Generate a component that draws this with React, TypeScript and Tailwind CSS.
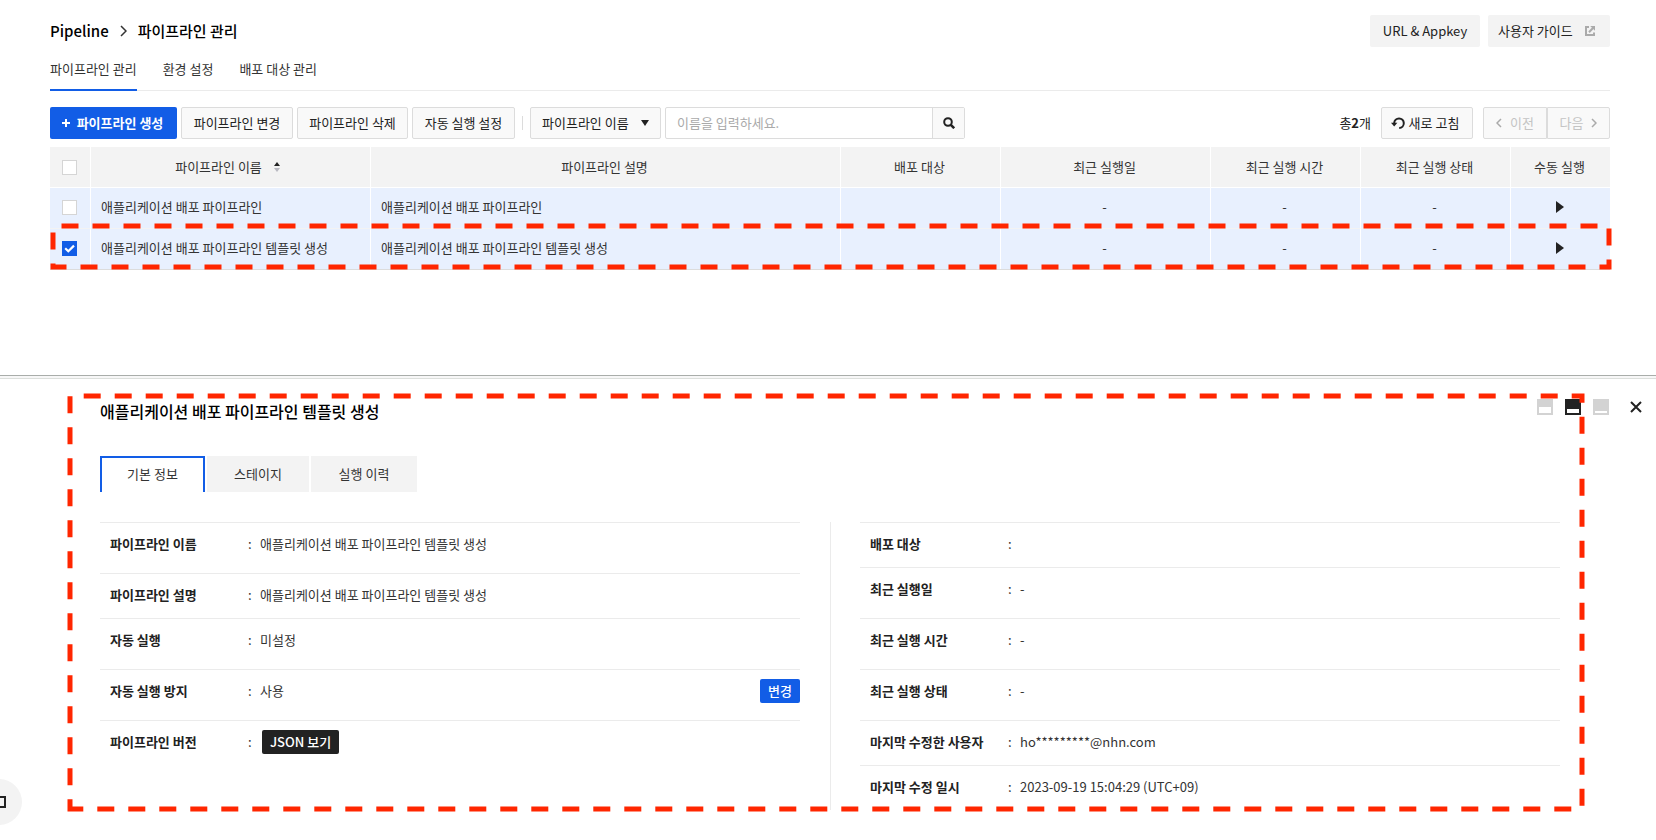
import React, { useState } from "react";

const rows = [
  { name: "애플리케이션 배포 파이프라인", desc: "애플리케이션 배포 파이프라인" },
  { name: "애플리케이션 배포 파이프라인 템플릿 생성", desc: "애플리케이션 배포 파이프라인 템플릿 생성" },
];

const btn =
  "flex h-8 items-center justify-center rounded-[2px] border border-[#dcdcdc] bg-[#f9f9f9] whitespace-nowrap";
const th = "h-10 border-r border-b border-white bg-[#f3f3f3] pr-0.5 font-normal last:border-r-0";
const td = "h-10 border-r border-white bg-[#e8f0fe] pr-0.5 pb-0.5 last:border-r-0";

function DashedFrame({ className, offset }: { className: string; offset: number }) {
  return (
    <svg className={`pointer-events-none absolute overflow-visible ${className}`} aria-hidden="true">
      <rect
        width="100%"
        height="100%"
        fill="none"
        stroke="#ff2600"
        strokeWidth="5"
        strokeDasharray="17 14"
        strokeDashoffset={offset}
      />
    </svg>
  );
}

function Check({ label, initial = false }: { label: string; initial?: boolean }) {
  const [on, setOn] = useState(initial);
  return (
    <label className="relative ml-3 block size-[15px]">
      <input
        type="checkbox"
        aria-label={label}
        checked={on}
        onChange={(e) => setOn(e.target.checked)}
        className="block size-[15px] appearance-none border border-[#d5d5d5] bg-white checked:border-[#125de6] checked:bg-[#125de6]"
      />
      {on && (
        <svg className="pointer-events-none absolute inset-0" width="15" height="15" viewBox="0 0 15 15" fill="none">
          <path d="M3.2 7.2 6.3 10.2 12 4.6" stroke="#fff" strokeWidth="2.2" />
        </svg>
      )}
    </label>
  );
}

function Field({
  label,
  tall = false,
  action,
  children,
}: {
  label: string;
  tall?: boolean;
  action?: React.ReactNode;
  children?: React.ReactNode;
}) {
  return (
    <div className={`flex items-start border-t border-[#ebebeb] pt-[9px] pl-2.5 ${tall ? "h-[51px]" : "h-[45px]"}`}>
      <dt className="w-[138px] leading-6 font-bold text-[#222]">{label}</dt>
      <dd className="flex flex-1 items-start leading-6">
        <span className="w-3">:</span>
        <div className="flex-1">{children}</div>
        {action}
      </dd>
    </div>
  );
}

function SizeIcon({ label, top, active = false }: { label: string; top: number; active?: boolean }) {
  return (
    <button type="button" aria-label={label} className={active ? "text-[#222]" : "text-[#d3d3d3]"}>
      <svg width="16" height="16" viewBox="0 0 16 16">
        <path fill="currentColor" d="M0 0h16v16H0z" />
        <rect x="2" y={top} width="12" height={14 - top} fill="#fff" />
      </svg>
    </button>
  );
}

export default function App() {
  const [query, setQuery] = useState("");
  return (
    <div className="relative flex min-h-screen flex-col overflow-hidden bg-white font-['Noto_Sans_CJK_KR','Noto_Sans_KR',sans-serif] text-[13px] leading-5 text-[#333]">
      <main className="min-h-[375px] px-[50px] pr-[46px]">
        <header className="flex items-start justify-between pt-[15px]">
          <h1 className="flex h-8 items-center text-[15px] font-medium text-black">
            Pipeline
            <svg className="mx-[11px]" width="7" height="12" viewBox="0 0 7 12" fill="none">
              <path d="M1 1l5 5-5 5" stroke="#333" strokeWidth="1.5" />
            </svg>
            파이프라인 관리
          </h1>
          <div className="flex gap-2 text-[#222]">
            <button type="button" className="h-8 w-[110px] rounded-[2px] bg-[#f3f3f3]">
              URL &amp; Appkey
            </button>
            <a href="#guide" className="flex h-8 w-[122px] items-center gap-3 rounded-[2px] bg-[#f3f3f3] pl-2.5">
              사용자 가이드
              <svg width="10" height="10" viewBox="0 0 10 10" fill="none" stroke="#aaa" strokeWidth="2">
                <path d="M4 1H1v8h8V6.5M4 6.2 8 2" />
                <path d="M5.2 0H10v4.8z" fill="#aaa" stroke="none" />
              </svg>
            </a>
          </div>
        </header>

        <nav className="mt-2.5 flex h-[34px] gap-[26px] border-b border-[#ebebeb]">
          <a href="#manage" className="h-[34px] border-b-2 border-[#125de6] pt-0.5">
            파이프라인 관리
          </a>
          <a href="#env" className="pt-0.5">환경 설정</a>
          <a href="#target" className="pt-0.5">배포 대상 관리</a>
        </nav>

        <div className="mt-4 flex items-center justify-between text-[#222]">
          <div className="flex items-center gap-1">
            <button type="button" className="flex h-8 w-[127px] items-center justify-center gap-[7px] rounded-[2px] bg-[#125de6] pr-0.5 font-bold text-white">
              <svg width="8" height="8" viewBox="0 0 8 8" stroke="#fff" strokeWidth="2">
                <path d="M4 0v8M0 4h8" />
              </svg>
              파이프라인 생성
            </button>
            <button type="button" className={`${btn} w-28`}>파이프라인 변경</button>
            <button type="button" className={`${btn} w-[111px]`}>파이프라인 삭제</button>
            <button type="button" className={`${btn} w-[103px]`}>자동 실행 설정</button>
            <span className="mx-[3px] h-3.5 w-px bg-[#dcdcdc]" />
            <div className="relative">
              <select aria-label="검색 기준" className="h-8 w-[131px] appearance-none rounded-[2px] border border-[#dcdcdc] bg-[#f9f9f9] pl-[11px]">
                <option>파이프라인 이름</option>
                <option>파이프라인 설명</option>
              </select>
              <svg className="pointer-events-none absolute top-[13px] right-3" width="8" height="6" viewBox="0 0 8 6">
                <path d="M0 0h8L4 6z" fill="#222" />
              </svg>
            </div>
            <div className="flex h-8 w-[300px] rounded-[2px] border border-[#dcdcdc]">
              <input
                type="text"
                aria-label="검색어"
                value={query}
                onChange={(e) => setQuery(e.target.value)}
                placeholder="이름을 입력하세요."
                className="min-w-0 flex-1 pl-[11px] outline-none placeholder:text-[#aaa]"
              />
              <button type="button" aria-label="검색" className="flex w-8 items-center justify-center border-l border-[#dcdcdc] bg-[#f9f9f9]">
                <svg width="12" height="12" viewBox="0 0 12 12" fill="none" stroke="#222" strokeWidth="2">
                  <circle cx="5" cy="5" r="3.8" />
                  <path d="M7.6 7.6 11.2 11.2" strokeWidth="2.6" />
                </svg>
              </button>
            </div>
          </div>
          <div className="flex items-center">
            <span className="mr-2.5">총<b>2</b>개</span>
            <button type="button" className={`${btn} mr-2.5 w-[92px] gap-1 pr-1`}>
              <svg className="shrink-0" width="14" height="12" viewBox="0 0 14 12" fill="none">
                <path d="M3.2 7V6A4.8 4.8 0 1 1 8.2 11" stroke="#222" strokeWidth="2" />
                <path d="M0 5.8h6.4L3.2 9.6z" fill="#222" />
              </svg>
              새로 고침
            </button>
            <div className="flex">
              <button type="button" disabled className="flex h-8 w-16 items-center justify-center gap-2 rounded-l-[2px] border border-[#dcdcdc] bg-[#f9f9f9] text-[#c4c4c4]">
                <svg width="6" height="10" viewBox="0 0 6 10" fill="none" stroke="#aaa" strokeWidth="1.5">
                  <path d="M5 1 1 5l4 4" />
                </svg>
                이전
              </button>
              <button type="button" disabled className="flex h-8 w-[63px] items-center justify-center gap-2 rounded-r-[2px] border border-[#dcdcdc] bg-[#f9f9f9] text-[#c4c4c4]">
                다음
                <svg width="6" height="10" viewBox="0 0 6 10" fill="none" stroke="#aaa" strokeWidth="1.5">
                  <path d="M1 1l4 4-4 4" />
                </svg>
              </button>
            </div>
          </div>
        </div>

        <div className="relative mt-2">
          <table className="w-full table-fixed border-separate border-spacing-0 border-b border-[#dcdcdc]">
            <colgroup>
              <col className="w-[41px]" />
              <col className="w-[280px]" />
              <col />
              <col className="w-[160px]" />
              <col className="w-[210px]" />
              <col className="w-[150px]" />
              <col className="w-[150px]" />
              <col className="w-[99px]" />
            </colgroup>
            <thead>
              <tr className="h-[41px]">
                <th className={th}><Check label="전체 선택" /></th>
                <th className={th}>
                  <button type="button" className="mr-1 inline-flex items-center gap-3">
                    파이프라인 이름
                    <svg width="6" height="10" viewBox="0 0 6 10">
                      <path d="M0 4h6L3 0z" fill="#222" />
                      <path d="M0 6h6L3 10z" fill="#b8b8c0" />
                    </svg>
                  </button>
                </th>
                <th className={th}>파이프라인 설명</th>
                <th className={th}>배포 대상</th>
                <th className={th}>최근 실행일</th>
                <th className={th}>최근 실행 시간</th>
                <th className={th}>최근 실행 상태</th>
                <th className={th}>수동 실행</th>
              </tr>
            </thead>
            <tbody className="text-center">
              {rows.map((r, i) => (
                <tr key={r.name} className={i === 0 ? "h-[41px] [&>td]:border-b [&>td]:border-b-[#f3f3f3]" : "h-10"}>
                  <td className={td}><Check label={r.name} initial={i === 1} /></td>
                  <td className={`${td} pl-2.5 text-left`}>{r.name}</td>
                  <td className={`${td} pl-2.5 text-left`}>{r.desc}</td>
                  <td className={td} />
                  <td className={td}>-</td>
                  <td className={td}>-</td>
                  <td className={td}>-</td>
                  <td className={td}>
                    <button type="button" aria-label="실행" className="mx-auto block">
                      <svg width="8" height="12" viewBox="0 0 8 12">
                        <path d="M0 0l8 6-8 6z" fill="#222" />
                      </svg>
                    </button>
                  </td>
                </tr>
              ))}
            </tbody>
          </table>
          <DashedFrame className="bottom-[3px] left-[3px] h-[41px] w-[calc(100%-4px)]" offset={-8.5} />
        </div>
      </main>

      <section className="relative border-t border-[#a9adaa]">
        <div className="h-[3px] border-b border-[#dcdfdc] bg-[#f7f7f7]" />
        <DashedFrame className="top-5 left-[70px] h-[413px] w-[calc(100%-144px)] -scale-y-100" offset={3.7} />
        <div className="flex items-start justify-between pt-5 pr-[14px] pl-[100px]">
          <h2 className="text-[16px] leading-6 font-medium text-black">애플리케이션 배포 파이프라인 템플릿 생성</h2>
          <div className="flex h-4 items-center gap-3">
            <SizeIcon label="크게" top={8} />
            <SizeIcon label="중간" top={10} active />
            <SizeIcon label="작게" top={12} />
            <button type="button" aria-label="닫기" className="ml-[9px]">
              <svg width="12" height="12" viewBox="0 0 12 12" stroke="#222" strokeWidth="2">
                <path d="M1 1l10 10M11 1 1 11" />
              </svg>
            </button>
          </div>
        </div>
        <div className="mt-[33px] flex gap-0.5 pl-[100px]">
          <button type="button" className="h-9 w-[105px] border-2 border-b-0 border-[#125de6] bg-white pb-0.5">기본 정보</button>
          <button type="button" className="h-9 w-[102px] bg-[#f3f3f3]">스테이지</button>
          <button type="button" className="h-9 w-[106px] bg-[#f3f3f3]">실행 이력</button>
        </div>
        <div className="mt-[30px] mr-[96px] ml-[100px] flex">
          <dl className="flex-1">
            <Field label="파이프라인 이름" tall>애플리케이션 배포 파이프라인 템플릿 생성</Field>
            <Field label="파이프라인 설명">애플리케이션 배포 파이프라인 템플릿 생성</Field>
            <Field label="자동 실행" tall>미설정</Field>
            <Field
              label="자동 실행 방지"
              tall
              action={
                <button type="button" className="h-6 w-10 rounded-[2px] bg-[#125de6] font-medium text-white">변경</button>
              }
            >
              사용
            </Field>
            <Field label="파이프라인 버전">
              <button type="button" className="ml-0.5 block h-6 w-[77px] rounded-[2px] bg-[#222] font-medium text-white">JSON 보기</button>
            </Field>
          </dl>
          <div className="mr-[29px] ml-[30px] h-[288px] w-px bg-[#ebebeb]" />
          <dl className="flex-1">
            <Field label="배포 대상" />
            <Field label="최근 실행일" tall>-</Field>
            <Field label="최근 실행 시간" tall>-</Field>
            <Field label="최근 실행 상태" tall>-</Field>
            <Field label="마지막 수정한 사용자">ho*********@nhn.com</Field>
            <Field label="마지막 수정 일시">2023-09-19 15:04:29 (UTC+09)</Field>
          </dl>
        </div>
      </section>

      <button
        type="button"
        aria-label="메뉴 열기"
        className="absolute bottom-[15px] -left-6 flex size-[46px] items-center justify-center rounded-full bg-[#f3f3f3]"
      >
        <span className="ml-0.5 size-3 border-2 border-[#222]" />
      </button>
    </div>
  );
}
